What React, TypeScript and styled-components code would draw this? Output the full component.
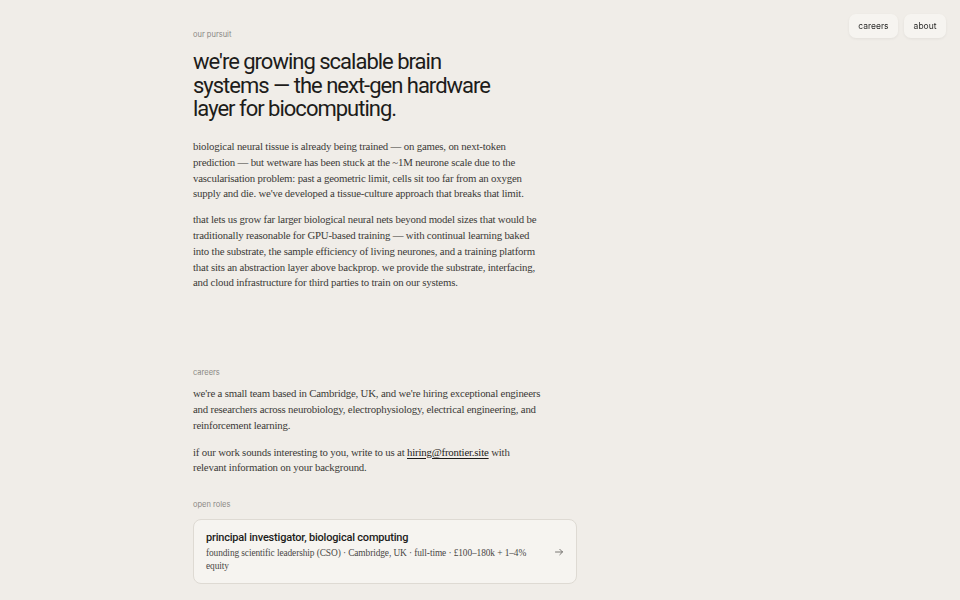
import styled, { createGlobalStyle } from "styled-components";

const Global = createGlobalStyle`
html, body {
  margin: 0;
  padding: 0;
  background: #f0ede8;
}
body {
  font-family: "Liberation Serif", serif;
  color: #3b3a37;
}
* { box-sizing: border-box; }
`;

const Page = styled.div`
  min-height: 600px;
  padding: 30px 0 40px 193px;
  position: relative;
`;

const Nav = styled.nav`
  position: fixed;
  top: 14px;
  right: 14px;
  display: flex;
  gap: 6px;
`;

const NavButton = styled.a`
  display: flex;
  align-items: center;
  height: 24px;
  padding: 0 9.5px;
  background: #f6f4f0;
  border-radius: 7px;
  box-shadow: 0 1px 3px rgba(0, 0, 0, 0.06);
  font-family: Inter, "Noto Sans", sans-serif;
  font-size: 8.5px;
  color: #2a2a28;
  text-decoration: none;
`;

const Column = styled.main`
  width: 384px;
  display: flex;
  flex-direction: column;
`;

const Label = styled.div<{ $top?: number }>`
  font-family: Inter, "Noto Sans", sans-serif;
  font-size: 7.5px;
  line-height: 9px;
  color: #8a8884;
  margin-top: ${(p) => p.$top ?? 0}px;
`;

const Headline = styled.h1`
  font-family: Roboto, "Noto Sans", sans-serif;
  font-weight: 400;
  font-size: 22px;
  line-height: 23.5px;
  letter-spacing: -1px;
  color: #1d1c1a;
  margin: 11px 0 18.5px;
  width: 305px;
`;

const Para = styled.p<{ $top?: number }>`
  font-size: 10.8px;
  line-height: 15.8px;
  letter-spacing: -0.18px;
  margin: ${(p) => p.$top ?? 10}px 0 0;
  width: 350px;
`;

const Mail = styled.a`
  color: #1d1c1a;
  text-decoration: underline;
  text-underline-offset: 2px;
`;

const Card = styled.div`
  margin-top: 10.5px;
  border: 1px solid #dedad3;
  border-radius: 8px;
  background: #f6f4f0;
  padding: 11px 12px 11px 12px;
  display: flex;
  align-items: center;
  gap: 20px;
`;

const CardBody = styled.div`
  flex: 1;
`;

const CardTitle = styled.div`
  font-family: Roboto, "Noto Sans", sans-serif;
  font-weight: 500;
  font-size: 11px;
  line-height: 14px;
  color: #1d1c1a;
  letter-spacing: -0.2px;
  margin-bottom: 2px;
`;

const CardMeta = styled.div`
  font-size: 9.4px;
  line-height: 12.5px;
  letter-spacing: -0.1px;
  color: #4a4946;
  width: 326px;
`;

const Arrow = styled.svg`
  width: 10px;
  height: 10px;
  flex-shrink: 0;
`;

export default function App() {
  return (
    <Page>
      <Global />
      <Nav>
        <NavButton href="#careers">careers</NavButton>
        <NavButton href="#about">about</NavButton>
      </Nav>
      <Column>
        <Label>our pursuit</Label>
        <Headline>
          we're growing scalable brain systems — the next-gen hardware layer for biocomputing.
        </Headline>
        <Para $top={0}>
          biological neural tissue is already being trained — on games, on next-token prediction — but wetware
          has been stuck at the ~1M neurone scale due to the vascularisation problem: past a geometric limit,
          cells sit too far from an oxygen supply and die. we've developed a tissue-culture approach that breaks
          that limit.
        </Para>
        <Para>
          that lets us grow far larger biological neural nets beyond model sizes that would be traditionally
          reasonable for GPU-based training — with continual learning baked into the substrate, the sample
          efficiency of living neurones, and a training platform that sits an abstraction layer above backprop.
          we provide the substrate, interfacing, and cloud infrastructure for third parties to train on our
          systems.
        </Para>

        <Label $top={76.5}>careers</Label>
        <Para $top={9.5}>
          we're a small team based in Cambridge, UK, and we're hiring exceptional engineers and researchers
          across neurobiology, electrophysiology, electrical engineering, and reinforcement learning.
        </Para>
        <Para $top={11}>
          if our work sounds interesting to you, write to us at <Mail href="#">hiring@frontier.site</Mail> with
          relevant information on your background.
        </Para>

        <Label $top={23.5}>open roles</Label>
        <Card>
          <CardBody>
            <CardTitle>principal investigator, biological computing</CardTitle>
            <CardMeta>
              founding scientific leadership (CSO) · Cambridge, UK · full-time · £100–180k + 1–4% equity
            </CardMeta>
          </CardBody>
          <Arrow viewBox="0 0 10 10" fill="none" stroke="#6b6965" strokeWidth="0.9" strokeLinecap="round" strokeLinejoin="round">
            <path d="M1.5 5h7M5.8 2.3 8.5 5 5.8 7.7" />
          </Arrow>
        </Card>
      </Column>
    </Page>
  );
}
